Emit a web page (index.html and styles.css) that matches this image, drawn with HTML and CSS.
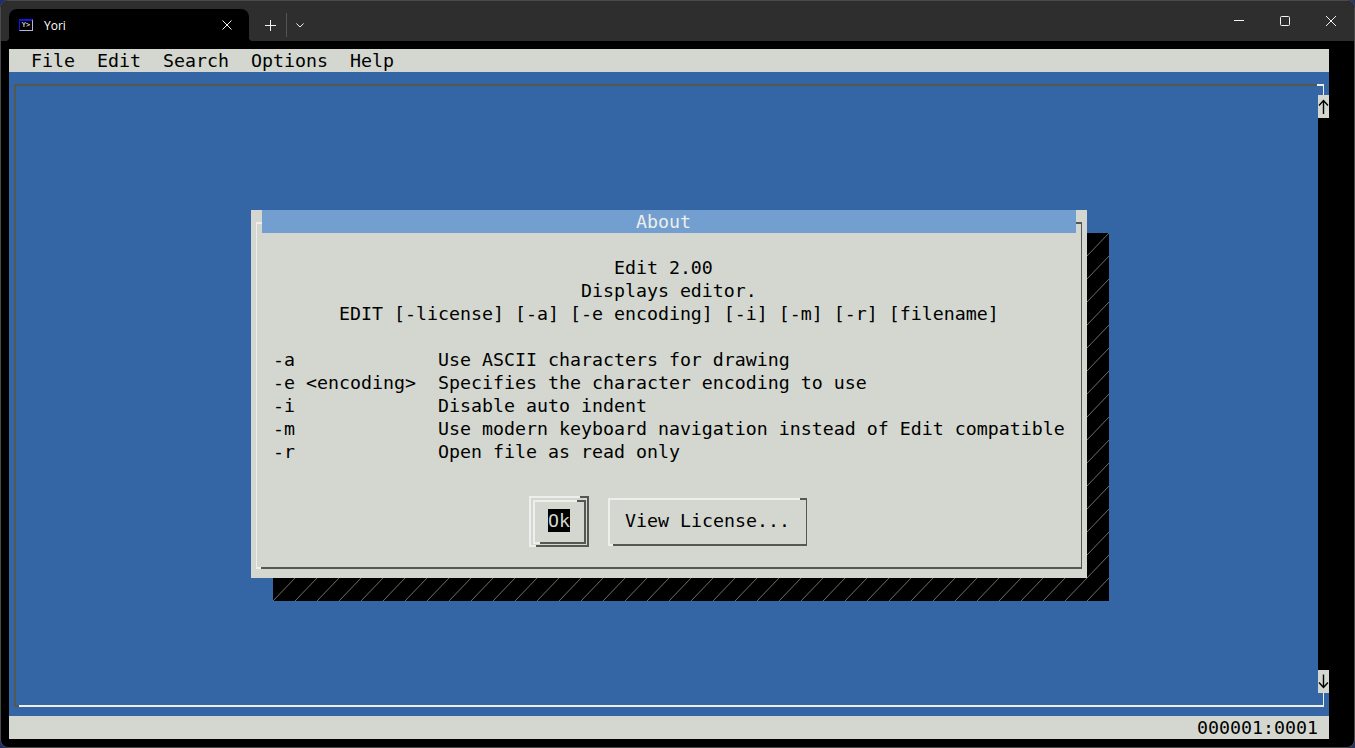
FILE: index.html
```html
<!DOCTYPE html>
<html lang="en">
<head>
<meta charset="utf-8">
<title>Yori</title>
<link rel="stylesheet" href="styles.css">
</head>
<body>
<div class="window">
  <header class="titlebar">
    <div class="tab">
      <span class="tab-icon">Y&gt;</span>
      <span class="tab-title">Yori</span>
      <svg class="tab-close" width="10" height="10" viewBox="0 0 10 10"><path d="M.5.5l9 9M9.500.5l-9 9"/></svg>
    </div>
    <div class="tab-actions">
      <button class="tab-btn tab-new"><svg width="11" height="11" viewBox="0 0 11 11"><path d="M5.500 0v11M0 5.500h11"/></svg></button>
      <span class="tab-divider"></span>
      <button class="tab-btn tab-menu"><svg width="8" height="5" viewBox="0 0 8 5"><path d="M.4.500L4 4l3.600-3.500"/></svg></button>
    </div>
    <div class="controls">
      <button class="ctl"><svg width="10" height="10" viewBox="0 0 10 10"><path d="M0 4.500h10"/></svg></button>
      <button class="ctl"><svg width="10" height="10" viewBox="0 0 10 10"><rect x=".5" y=".5" width="9" height="9" rx="1"/></svg></button>
      <button class="ctl"><svg width="10" height="10" viewBox="0 0 10 10"><path d="M0 0l10 10M10 0L0 10"/></svg></button>
    </div>
  </header>
  <main class="screen">
    <nav class="menubar">
      <span class="menu-item">File</span>
      <span class="menu-item">Edit</span>
      <span class="menu-item">Search</span>
      <span class="menu-item">Options</span>
      <span class="menu-item">Help</span>
    </nav>
    <div class="workspace">
      <div class="pane">
        <section class="dialog">
          <svg class="dialog-shadow" width="836" height="368">
            <defs>
              <pattern id="hatch" width="22" height="23" patternUnits="userSpaceOnUse">
                <path d="M-1 24L23-1"/>
              </pattern>
            </defs>
            <rect width="836" height="368" fill="url(#hatch)"/>
          </svg>
          <div class="frame dialog-frame"></div>
          <div class="dialog-title">                                  About</div>
          <div class="dialog-body">                                 Edit 2.00
                              Displays editor.
        EDIT [-license] [-a] [-e encoding] [-i] [-m] [-r] [filename]

  -a             Use ASCII characters for drawing
  -e &lt;encoding&gt;  Specifies the character encoding to use
  -i             Disable auto indent
  -m             Use modern keyboard navigation instead of Edit compatible
  -r             Open file as read only</div>
          <div class="dialog-buttons">
            <div class="btn btn-ok">
              <div class="frame ok-outer"></div>
              <div class="frame ok-inner"></div>
              <span class="ok-label">Ok</span>
            </div>
            <div class="btn btn-license">
              <div class="frame license-frame"></div>
              <span>View License...</span>
            </div>
          </div>
        </section>
      </div>
      <div class="frame main-frame"></div>
      <div class="scrollbar">
        <div class="scroll-gap"></div>
        <div class="scroll-arrow"><svg width="11" height="23" viewBox="0 0 11 23"><path d="M5.500 5v14M1 10.500l4.500-5 4.500 5"/></svg></div>
        <div class="scroll-track"></div>
        <div class="scroll-arrow"><svg width="11" height="23" viewBox="0 0 11 23"><path d="M5.500 4.500v13.500M1 12.500l4.500 5 4.500-5"/></svg></div>
        <div class="scroll-gap"></div>
      </div>
    </div>
    <footer class="statusbar">000001:0001</footer>
  </main>
</div>
</body>
</html>
```
FILE: styles.css
```css
* { box-sizing: border-box; }

html, body { margin: 0; height: 100%; }

body {
  background: linear-gradient(to right, #1f2f6e 0, #26366e 25%, #8e8e86 45%, #9a7f5c 75%, #8f8f8f 90%, #2a3560 100%);
  overflow: hidden;
}

.window {
  width: 1355px;
  height: 748px;
  background: #000;
  border: 1px solid #4a4a4a;
  border-radius: 8px;
  overflow: hidden;
}

/* title bar */
.titlebar {
  display: flex;
  height: 40px;
  padding-left: 8px;
  background: #2e2e2e;
  color: #fff;
}

.tab {
  position: relative;
  display: flex;
  align-items: center;
  width: 240px;
  height: 32px;
  margin-top: 8px;
  padding: 0 17px 0 10px;
  background: #000;
  border-radius: 8px 8px 0 0;
  font: 600 12px "Open Sans", "Noto Sans", sans-serif;
}

/* the flared feet of the active tab */
.tab::before,
.tab::after {
  content: "";
  position: absolute;
  bottom: 0;
  width: 4px;
  height: 4px;
}

.tab::before { left: -4px; background: radial-gradient(circle at 0 0, transparent 4px, #000 4.5px); }
.tab::after { right: -4px; background: radial-gradient(circle at 100% 0, transparent 4px, #000 4.5px); }

.tab-icon {
  width: 14px;
  height: 12px;
  margin-right: 11px;
  background: #000;
  border: 1px solid #1414e6;
  border-top-width: 2px;
  border-right-color: #b8b8d8;
  border-bottom-color: #b8b8d8;
  color: #fff;
  font: 7px/9px "DejaVu Sans Mono", monospace;
  text-align: center;
  overflow: hidden;
}

.tab-title { flex: 1; font-weight: 400; }

.tab-close, .tab-btn svg, .ctl svg {
  fill: none;
  stroke: #f2f2f2;
  stroke-width: 1;
}

.tab-actions {
  display: flex;
  align-items: center;
  height: 32px;
  margin: 8px 0 0 5px;
}

.tab-btn, .ctl {
  display: flex;
  align-items: center;
  justify-content: center;
  padding: 0;
  border: 0;
  background: none;
}

.tab-new { width: 32px; height: 32px; }
.tab-menu { width: 25px; height: 32px; }
.tab-divider { width: 1px; height: 24px; background: #555; }

.controls { display: flex; margin-left: auto; }
.ctl { width: 46px; height: 40px; }

/* terminal grid: 11 x 23 px cells */
.screen {
  display: flex;
  flex-direction: column;
  width: 1320px;
  height: 690px;
  margin: 8px 0 0 8px;
  background: #3465a4;
  color: #000;
  font: 18.27px/23px "DejaVu Sans Mono", monospace;
}

.menubar {
  display: flex;
  flex: none;
  height: 23px;
  padding-left: 11px;
  background: #d3d7cf;
}

.menu-item { padding: 0 11px; }

.workspace {
  position: relative;
  display: flex;
  flex: 1;
}

.pane {
  flex: 1;
  padding: 138px 0 0 242px;
  isolation: isolate;
}

.statusbar {
  flex: none;
  height: 23px;
  padding-right: 11px;
  background: #d3d7cf;
  text-align: right;
}

/* bevel frames: light/dark edges with a short piece of the opposite colour at two corners */
.frame {
  position: absolute;
  inset: 12px 5px 9px;
  border-style: solid;
  border-width: 2px 1px;
  pointer-events: none;
}

.frame::before,
.frame::after {
  content: "";
  position: absolute;
  height: 2px;
}

.frame::before { top: -2px; right: -1px; width: 7px; }
.frame::after { bottom: -2px; left: -1px; width: 5px; }

.main-frame {
  border-color: #555753 #eeeeec #eeeeec #555753;
  border-left-width: 2px;
}
.main-frame::before { background: #eeeeec; }
.main-frame::after { left: -2px; background: #555753; }

.dialog-frame,
.license-frame,
.ok-outer,
.ok-inner {
  border-color: #eeeeec #555753 #555753 #eeeeec;
}
.dialog-frame::before,
.license-frame::before,
.ok-outer::before,
.ok-inner::before { background: #555753; }
.dialog-frame::after,
.license-frame::after,
.ok-outer::after,
.ok-inner::after { background: #eeeeec; }

/* scrollbar */
.scrollbar {
  position: relative;
  display: flex;
  flex: none;
  flex-direction: column;
  width: 11px;
}

.scroll-gap { height: 23px; }
.scroll-arrow {
  height: 23px;
  background: #d3d7cf;
}
.scroll-arrow svg {
  display: block;
  fill: none;
  stroke: #000;
  stroke-width: 1.4;
}
.scroll-track { flex: 1; background: #000; }

/* dialog */
.dialog {
  position: relative;
  width: 836px;
  height: 368px;
  background: #d3d7cf;
}

.dialog-shadow {
  position: absolute;
  z-index: -1;
  top: 23px;
  left: 22px;
  background: #000;
}

.dialog-shadow path {
  fill: none;
  stroke: #8a8a8a;
  stroke-width: .8;
}

.dialog-title {
  position: relative;
  height: 23px;
  margin: 0 11px;
  background: #729fcf;
  color: #eeeeec;
  white-space: pre;
}

.dialog-body {
  height: 230px;
  padding-top: 23px;
  white-space: pre;
}

.dialog-buttons {
  display: flex;
  align-items: flex-start;
  gap: 19px;
  padding: 33px 0 0 278px;
}

.btn {
  position: relative;
  display: flex;
  align-items: flex-start;
  justify-content: center;
}

.btn-ok { width: 60px; height: 51px; padding-top: 13px; }
.btn-license { width: 199px; height: 48px; margin-top: 2px; padding-top: 11px; }

.ok-outer { inset: 0; border-width: 2px; }
.ok-inner { inset: 4px 3px 3px 4px; border-width: 2px; }
.license-frame { inset: 0; border-left-width: 2px; }

.ok-outer::before, .ok-inner::before { right: -2px; width: 9px; }
.ok-outer::after, .ok-inner::after { left: -2px; width: 7px; }
.license-frame::after { left: -2px; }

.ok-label {
  background: #000;
  color: #d3d7cf;
}
```
